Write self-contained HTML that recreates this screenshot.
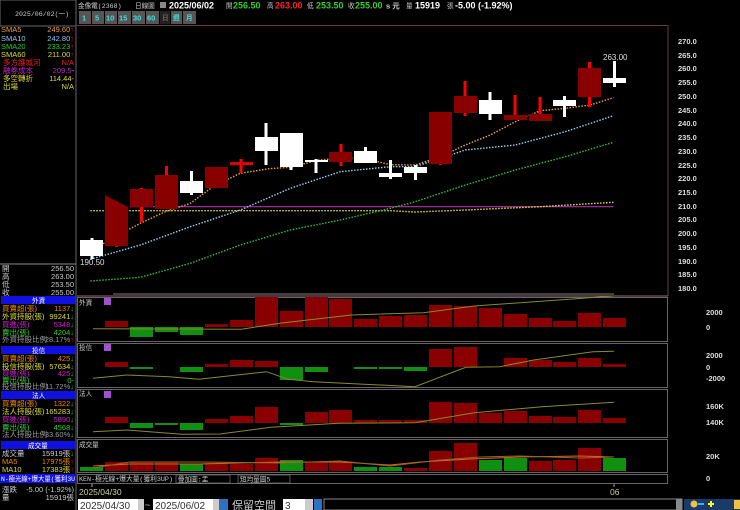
<!DOCTYPE html>
<html><head><meta charset="utf-8"><style>
html,body{margin:0;padding:0;background:#000;width:740px;height:510px;overflow:hidden}
svg{display:block}
text{font-family:"Liberation Sans","Noto Sans CJK TC",sans-serif;font-size:7.5px}
.m{font-family:"Liberation Mono","Noto Sans CJK TC",monospace;font-size:6.6px}
.ax{font-family:"Liberation Sans",sans-serif;font-size:8.5px;font-weight:bold;fill:#ddd}
</style></head><body>
<svg width="740" height="510" viewBox="0 0 740 510" xmlns="http://www.w3.org/2000/svg">
<rect width="740" height="510" fill="#000"/>
<!-- left panel -->
<rect x="0" y="0" width="76" height="26" fill="#000" stroke="#666" stroke-width="1"/>
<text x="15" y="16" fill="#ccc" class="m">2025/06/02(一)</text>
<line x1="76" y1="0" x2="76" y2="510" stroke="#666"/>
<g class="m">
<text x="1" y="32" fill="#e8a040">SMA5</text><text x="74" y="32" fill="#e8a040" text-anchor="end">249.60<tspan fill="#f00">↑</tspan></text>
<text x="1" y="41" fill="#8cc8f0">SMA10</text><text x="74" y="41" fill="#8cc8f0" text-anchor="end">242.80<tspan fill="#f00">↑</tspan></text>
<text x="1" y="49" fill="#2c2">SMA20</text><text x="74" y="49" fill="#2c2" text-anchor="end">233.23<tspan fill="#f00">↑</tspan></text>
<text x="1" y="57" fill="#dd3">SMA60</text><text x="74" y="57" fill="#dd3" text-anchor="end">211.00<tspan fill="#f00">↑</tspan></text>
<text x="3" y="65" fill="#e22">多方護城河</text><text x="74" y="65" fill="#e22" text-anchor="end">N/A</text>
<text x="3" y="73" fill="#c2c">融券成本</text><text x="74" y="73" fill="#c2c" text-anchor="end">209.5<tspan fill="#ccc">-</tspan></text>
<text x="3" y="81" fill="#dd3">多空轉折</text><text x="74" y="81" fill="#dd3" text-anchor="end">114.44<tspan fill="#ccc">-</tspan></text>
<text x="3" y="89" fill="#dd3">出場</text><text x="74" y="89" fill="#dd3" text-anchor="end">N/A</text>
</g>
<line x1="0" y1="264" x2="76" y2="264" stroke="#888"/>
<g class="m" fill="#ccc">
<text x="2" y="271">開</text><text x="74" y="271" text-anchor="end">256.50</text>
<text x="2" y="279">高</text><text x="74" y="279" text-anchor="end">263.00</text>
<text x="2" y="287">低</text><text x="74" y="287" text-anchor="end">253.50</text>
<text x="2" y="295">收</text><text x="74" y="295" text-anchor="end">255.00</text>
</g>
<!-- 外資 -->
<rect x="1" y="296" width="74" height="8" fill="#1010e0"/><text x="32" y="303" fill="#fff" class="m">外資</text>
<g class="m">
<text x="2" y="311" fill="#e80">買賣超(張)</text><text x="74" y="311" fill="#e80" text-anchor="end">1137<tspan fill="#3c3">↓</tspan></text>
<text x="2" y="319" fill="#dd3">外資持股(張)</text><text x="74" y="319" fill="#dd3" text-anchor="end">99241<tspan fill="#3c3">↓</tspan></text>
<text x="2" y="327" fill="#c2c">買進(張)</text><text x="74" y="327" fill="#c2c" text-anchor="end">5348<tspan fill="#3c3">↓</tspan></text>
<text x="2" y="335" fill="#3c3">賣出(張)</text><text x="74" y="335" fill="#3c3" text-anchor="end">4204<tspan fill="#3c3">↓</tspan></text>
<text x="2" y="342" fill="#999">外資持股比例</text><text x="74" y="342" fill="#999" text-anchor="end">28.17%<tspan fill="#f00">↑</tspan></text>
</g>
<rect x="1" y="346" width="74" height="8" fill="#1010e0"/><text x="32" y="353" fill="#fff" class="m">投信</text>
<g class="m">
<text x="2" y="361" fill="#e80">買賣超(張)</text><text x="74" y="361" fill="#e80" text-anchor="end">425<tspan fill="#3c3">↓</tspan></text>
<text x="2" y="369" fill="#dd3">投信持股(張)</text><text x="74" y="369" fill="#dd3" text-anchor="end">57634<tspan fill="#3c3">↓</tspan></text>
<text x="2" y="376" fill="#c2c">買進(張)</text><text x="74" y="376" fill="#c2c" text-anchor="end">425<tspan fill="#3c3">↓</tspan></text>
<text x="2" y="383" fill="#3c3">賣出(張)</text><text x="74" y="383" fill="#3c3" text-anchor="end">0-</text>
<text x="2" y="389" fill="#999">投信持股比例</text><text x="74" y="389" fill="#999" text-anchor="end">11.72%<tspan fill="#3c3">↓</tspan></text>
</g>
<rect x="1" y="391" width="74" height="8" fill="#1010e0"/><text x="32" y="398" fill="#fff" class="m">法人</text>
<g class="m">
<text x="2" y="406" fill="#e80">買賣超(張)</text><text x="74" y="406" fill="#e80" text-anchor="end">1322<tspan fill="#3c3">↓</tspan></text>
<text x="2" y="414" fill="#dd3">法人持股(張)</text><text x="74" y="414" fill="#dd3" text-anchor="end">165283<tspan fill="#3c3">↓</tspan></text>
<text x="2" y="422" fill="#c2c">買進(張)</text><text x="74" y="422" fill="#c2c" text-anchor="end">5890<tspan fill="#3c3">↓</tspan></text>
<text x="2" y="430" fill="#3c3">賣出(張)</text><text x="74" y="430" fill="#3c3" text-anchor="end">4568<tspan fill="#3c3">↓</tspan></text>
<text x="2" y="437" fill="#999">法人持股比例</text><text x="74" y="437" fill="#999" text-anchor="end">33.60%<tspan fill="#3c3">↓</tspan></text>
</g>
<rect x="1" y="441" width="74" height="8" fill="#1010e0"/><text x="28" y="448" fill="#fff" class="m">成交量</text>
<g class="m">
<text x="2" y="456" fill="#ccc">成交量</text><text x="74" y="456" fill="#ccc" text-anchor="end">15919張<tspan fill="#3c3">↓</tspan></text>
<text x="2" y="464" fill="#e80">MA5</text><text x="74" y="464" fill="#e80" text-anchor="end">17975張<tspan fill="#f00">↑</tspan></text>
<text x="2" y="472" fill="#dd3">MA10</text><text x="74" y="472" fill="#dd3" text-anchor="end">17383張<tspan fill="#f00">↑</tspan></text>
</g>
<rect x="0" y="474" width="76" height="9" fill="#1010e0"/><text x="1" y="481" fill="#fff" class="m" textLength="74" lengthAdjust="spacingAndGlyphs">N-極光線+爆大量(獲利3U</text>
<g class="m" fill="#ccc">
<text x="2" y="492">漲跌</text><text x="74" y="492" text-anchor="end">-5.00 (-1.92%)</text>
<text x="2" y="500">量</text><text x="74" y="500" text-anchor="end">15919張</text>
</g>

<!-- header -->
<text x="78" y="8" fill="#ccc" class="m">金像電(2368)</text>
<text x="135" y="8" fill="#ccc" class="m">日線圖</text>
<rect x="160" y="2" width="6" height="6" fill="#888"/>
<text x="169" y="8.5" fill="#fff" style="font-size:9px;font-weight:bold">2025/06/02</text>
<text x="226" y="8" fill="#ccc" class="m">開</text><text x="233" y="8.5" fill="#3c3" style="font-size:9px;font-weight:bold">256.50</text>
<text x="267" y="8" fill="#ccc" class="m">高</text><text x="275" y="8.5" fill="#f22" style="font-size:9px;font-weight:bold">263.00</text>
<text x="307" y="8" fill="#ccc" class="m">低</text><text x="316" y="8.5" fill="#3c3" style="font-size:9px;font-weight:bold">253.50</text>
<text x="348" y="8" fill="#ccc" class="m">收</text><text x="355" y="8.5" fill="#3c3" style="font-size:9px;font-weight:bold">255.00</text>
<text x="386" y="8.5" fill="#ccc" style="font-size:7.5px;font-weight:bold">s 元</text>
<text x="406" y="8" fill="#ccc" class="m">量</text><text x="415" y="8.5" fill="#fff" style="font-size:9px;font-weight:bold">15919</text>
<text x="447" y="8" fill="#ccc" class="m">張</text><text x="455" y="8.5" fill="#fff" style="font-size:9px;font-weight:bold">-5.00 (-1.92%)</text>
<g style="font-size:8.5px;font-weight:bold">
<rect x="79" y="11" width="12" height="13" fill="#555"/><text x="82" y="20.5" fill="#4dd">1</text>
<rect x="92" y="11" width="12" height="13" fill="#555"/><text x="95" y="20.5" fill="#4dd">5</text>
<rect x="105" y="11" width="12" height="13" fill="#555"/><text x="106" y="20.5" fill="#4dd">10</text>
<rect x="118" y="11" width="13" height="13" fill="#555"/><text x="119" y="20.5" fill="#4dd">15</text>
<rect x="132" y="11" width="13" height="13" fill="#555"/><text x="133" y="20.5" fill="#4dd">30</text>
<rect x="146" y="11" width="13" height="13" fill="#555"/><text x="147" y="20.5" fill="#4dd">60</text>
<rect x="160" y="11" width="10" height="13" fill="#222"/><text x="162" y="20" fill="#666" class="m">日</text>
<rect x="171" y="11" width="11" height="13" fill="#555"/><text x="173" y="20" fill="#4dd" class="m">週</text>
<rect x="183" y="11" width="13" height="13" fill="#555"/><text x="186" y="20" fill="#4dd" class="m">月</text>
</g>

<!-- main chart frame -->
<line x1="77" y1="25.5" x2="668" y2="25.5" stroke="#6a3a48"/>
<line x1="668" y1="25" x2="668" y2="296" stroke="#6a3a48"/>
<line x1="113" y1="294" x2="614" y2="294" stroke="#555" stroke-width="1.5"/>
<line x1="77" y1="296" x2="668" y2="296" stroke="#9a6a78"/>
<!-- price axis -->
<g class="ax">
<text x="678" y="44">270.0</text><text x="678" y="58">265.0</text><text x="678" y="71">260.0</text><text x="678" y="85">255.0</text>
<text x="678" y="99">250.0</text><text x="678" y="113">245.0</text><text x="678" y="126">240.0</text><text x="678" y="140">235.0</text>
<text x="678" y="154">230.0</text><text x="678" y="168">225.0</text><text x="678" y="181">220.0</text><text x="678" y="195">215.0</text>
<text x="678" y="209">210.0</text><text x="678" y="222">205.0</text><text x="678" y="236">200.0</text><text x="678" y="250">195.0</text>
<text x="678" y="264">190.0</text><text x="678" y="277">185.0</text><text x="678" y="291">180.0</text>
</g>
<!-- MA lines -->
<g fill="none" stroke-width="1.4" stroke-dasharray="1.5,1.5">
<polyline stroke="#b030b0" stroke-dasharray="none" stroke-width="1.2" points="129.6,206.7 613.5,206.7"/>
<polyline stroke="#e8e030" points="90.3,210.7 390.3,210.7 415.3,212 465.3,210 540.3,206.7 613.5,202.3"/>
<polyline stroke="#30c030" points="90.3,281 140.3,277.3 190.3,263.3 240.3,245 290.3,230 340.3,220 390.3,208.3 415.3,201.7 465.3,185 515.3,170 565.3,156.7 613.5,142.3"/>
<polyline stroke="#90d0f0" points="90.3,259.3 140.3,245 190.3,226.7 240.3,210 290.3,188.3 340.3,171.7 390.3,166.7 415.3,166.7 440.3,158.3 465.3,150 515.3,145 565.3,131.7 613.5,115.7"/>
<polyline stroke="#f0a040" points="90.3,251.7 108.1,240.7 140.3,223.3 165.3,211.7 190.3,203.3 215.3,185 240.3,173.3 268.9,168.7 290.3,167.3 318.9,160 340.3,158.3 365.3,158.7 390.3,164.7 415.3,165 440.3,156.7 465.3,145 490.3,135 515.3,121.7 540.3,110.7 565.3,108.3 590.3,105 613.5,97.7"/>
</g>
<!-- candles -->
<g>
<rect x="90.5" y="238" width="3" height="21" fill="#fff"/><rect x="80" y="240" width="23" height="16" fill="#fff"/>
<rect x="115" y="240" width="3" height="7" fill="#f00"/><polygon points="105,195 128,207 128,246 105,246" fill="#800"/>
<rect x="140" y="188" width="3" height="34" fill="#f00"/><rect x="130" y="189" width="23" height="18" fill="#800"/>
<rect x="165" y="166" width="3" height="43" fill="#f00"/><rect x="155" y="175" width="23" height="34" fill="#800"/>
<rect x="190" y="171" width="3" height="24" fill="#fff"/><rect x="180" y="181" width="23" height="12" fill="#fff"/>
<rect x="205" y="167" width="23" height="21" fill="#800"/>
<rect x="239.5" y="159" width="3" height="14" fill="#f00"/><rect x="230" y="162" width="23" height="3" fill="#d00"/>
<rect x="264.5" y="123" width="3" height="42" fill="#fff"/><rect x="255" y="137" width="23" height="14" fill="#fff"/>
<rect x="289.5" y="133" width="3" height="37" fill="#fff"/><rect x="280" y="133" width="23" height="34" fill="#fff"/>
<rect x="314.5" y="159" width="3" height="14" fill="#fff"/><rect x="305" y="160" width="23" height="2" fill="#fff"/>
<rect x="339.5" y="144" width="3" height="22" fill="#f00"/><rect x="329" y="152" width="23" height="10" fill="#800"/>
<rect x="364" y="147" width="3" height="16" fill="#fff"/><rect x="354" y="151" width="23" height="12" fill="#fff"/>
<rect x="389" y="160" width="3" height="19" fill="#fff"/><rect x="379" y="173" width="23" height="4" fill="#fff"/>
<rect x="414" y="165" width="3" height="15" fill="#fff"/><rect x="404" y="167" width="23" height="6" fill="#fff"/>
<rect x="439" y="112" width="3" height="53" fill="#f00"/><rect x="429" y="112" width="23" height="52" fill="#800"/>
<rect x="463.5" y="81" width="3" height="35" fill="#f00"/><rect x="454" y="96" width="23" height="17" fill="#800"/>
<rect x="488.5" y="92" width="3" height="28" fill="#fff"/><rect x="479" y="100" width="23" height="14" fill="#fff"/>
<rect x="513.5" y="95" width="3" height="25" fill="#f00"/><rect x="504" y="115" width="23" height="5" fill="#800"/>
<rect x="538.5" y="97" width="3" height="24" fill="#f00"/><rect x="529" y="114" width="23" height="7" fill="#800"/>
<rect x="563" y="96" width="3" height="21" fill="#fff"/><rect x="553" y="100" width="23" height="6" fill="#fff"/>
<rect x="588" y="62" width="3" height="45" fill="#f00"/><rect x="578" y="68" width="23" height="29" fill="#800"/>
<rect x="613" y="61" width="3" height="26" fill="#fff"/><rect x="603" y="78" width="23" height="5" fill="#fff"/>
</g>
<text x="80" y="265" fill="#ddd" style="font-size:8px">190.50</text>
<text x="603" y="60" fill="#ddd" style="font-size:8px">263.00</text>

<!-- indicator panels -->
<g fill="none" stroke="#666">
<rect x="77.5" y="297.5" width="590" height="44"/>
<rect x="77.5" y="343.5" width="590" height="44"/>
<rect x="77.5" y="389.5" width="590" height="48"/>
<rect x="77.5" y="439.5" width="590" height="33"/>
<rect x="77.5" y="474.5" width="590" height="9"/>
</g>
<text x="79" y="305" fill="#ccc" class="m">外資</text><rect x="104" y="298" width="7" height="7" fill="#a050d0"/>
<text x="79" y="350" fill="#ccc" class="m">投信</text><rect x="104" y="344" width="7" height="7" fill="#a050d0"/>
<text x="79" y="396" fill="#ccc" class="m">法人</text><rect x="104" y="391" width="7" height="7" fill="#a050d0"/>
<text x="79" y="447" fill="#ccc" class="m">成交量</text>
<g class="ax" style="font-size:8px">
<text x="706" y="315">2000</text><text x="706" y="330">0</text>
<text x="706" y="358">2000</text><text x="706" y="370">0</text><text x="706" y="381">-2000</text>
<text x="706" y="409">160K</text><text x="706" y="425">140K</text>
<text x="706" y="459">20K</text><text x="706" y="481">0</text>
</g>
<!-- 外資 bars zero 327 -->
<g fill="#8a0000">
<rect x="105" y="321" width="23" height="6"/><rect x="205" y="324" width="23" height="3"/><rect x="230" y="320" width="23" height="7"/>
<rect x="255" y="297" width="23" height="30"/><rect x="280" y="311" width="23" height="16"/><rect x="305" y="297" width="23" height="30"/>
<rect x="329" y="299" width="23" height="28"/><rect x="354" y="319" width="23" height="8"/><rect x="379" y="316" width="23" height="11"/>
<rect x="404" y="315" width="23" height="12"/><rect x="429" y="305" width="23" height="22"/><rect x="454" y="306" width="23" height="21"/>
<rect x="479" y="308" width="23" height="19"/><rect x="504" y="314" width="23" height="13"/><rect x="529" y="318" width="23" height="9"/>
<rect x="553" y="321" width="23" height="6"/><rect x="578" y="313" width="23" height="14"/><rect x="603" y="318" width="23" height="9"/>
</g>
<g fill="#109010"><rect x="130" y="327" width="23" height="10"/><rect x="155" y="327" width="23" height="5"/><rect x="180" y="327" width="23" height="8"/></g>
<polyline fill="none" stroke="#8a8a2a" stroke-width="1" points="93,328.7 241.3,329.3 279.4,323.3 351.4,315 423.5,312.7 474.3,306 614.1,296"/>
<!-- 投信 zero 367 -->
<g fill="#8a0000">
<rect x="105" y="362" width="23" height="5"/><rect x="205" y="364" width="23" height="3"/><rect x="230" y="360" width="23" height="7"/>
<rect x="255" y="361" width="23" height="6"/><rect x="429" y="349" width="23" height="18"/><rect x="454" y="347" width="23" height="20"/>
<rect x="504" y="358" width="23" height="9"/><rect x="529" y="360" width="23" height="7"/><rect x="553" y="362" width="23" height="5"/>
<rect x="578" y="358" width="23" height="9"/><rect x="603" y="364" width="23" height="3"/>
</g>
<g fill="#109010">
<rect x="130" y="367" width="23" height="2"/><rect x="180" y="367" width="23" height="5"/><rect x="280" y="367" width="23" height="13"/>
<rect x="305" y="367" width="23" height="5"/><rect x="354" y="367" width="23" height="2"/><rect x="379" y="367" width="23" height="2"/><rect x="404" y="367" width="23" height="4"/>
</g>
<polyline fill="none" stroke="#8a8a2a" stroke-width="1" points="93,378.3 126.8,375 169.2,376.7 198.9,379.3 266.7,371.7 287.9,379.3 313.3,381.7 415,386.7 465.8,367.3 499.7,366.7 533.6,360 593,351.7 614.1,351.3"/>
<!-- 法人 zero 423 -->
<g fill="#8a0000">
<rect x="105" y="417" width="23" height="6"/><rect x="205" y="419" width="23" height="4"/><rect x="230" y="416" width="23" height="7"/>
<rect x="255" y="407" width="23" height="16"/><rect x="305" y="412" width="23" height="11"/><rect x="329" y="410" width="23" height="13"/>
<rect x="354" y="420" width="23" height="3"/><rect x="379" y="420" width="23" height="3"/><rect x="404" y="420" width="23" height="3"/>
<rect x="429" y="402" width="23" height="21"/><rect x="454" y="403" width="23" height="20"/><rect x="479" y="413" width="23" height="10"/>
<rect x="504" y="411" width="23" height="12"/><rect x="529" y="416" width="23" height="7"/><rect x="553" y="417" width="23" height="6"/>
<rect x="578" y="410" width="23" height="13"/><rect x="603" y="418" width="23" height="5"/>
</g>
<g fill="#109010"><rect x="130" y="423" width="23" height="5"/><rect x="155" y="423" width="23" height="2"/><rect x="180" y="423" width="23" height="7"/><rect x="280" y="423" width="23" height="2"/></g>
<polyline fill="none" stroke="#8a8a2a" stroke-width="1" points="93,431.7 126.8,430 181.9,434.3 220.1,434 270.9,427.3 338.7,423.3 415,422.7 474.3,412.7 542.1,406.7 614.1,402.3"/>
<!-- volume base 471 -->
<g fill="#8a0000">
<rect x="105" y="462" width="23" height="9"/><rect x="130" y="462" width="23" height="9"/><rect x="155" y="462" width="23" height="9"/>
<rect x="205" y="463" width="23" height="8"/><rect x="230" y="464" width="23" height="7"/><rect x="255" y="458" width="23" height="13"/>
<rect x="305" y="462" width="23" height="9"/><rect x="329" y="462" width="23" height="9"/><rect x="404" y="468" width="23" height="3"/>
<rect x="429" y="451" width="23" height="20"/><rect x="454" y="443" width="23" height="28"/><rect x="529" y="461" width="23" height="10"/>
<rect x="553" y="460" width="23" height="11"/><rect x="578" y="448" width="23" height="23"/>
</g>
<g fill="#109010">
<rect x="80" y="467" width="23" height="4"/><rect x="180" y="464" width="23" height="7"/><rect x="280" y="460" width="23" height="11"/>
<rect x="354" y="467" width="23" height="4"/><rect x="379" y="467" width="23" height="4"/><rect x="479" y="460" width="23" height="11"/>
<rect x="504" y="458" width="23" height="13"/><rect x="603" y="458" width="23" height="13"/>
</g>
<polyline fill="none" stroke="#e06020" stroke-width="1" points="93,466 130,464 200,464 280,462 340,462 390,465 420,462 470,459 520,457 580,456 614,457"/>
<polyline fill="none" stroke="#8a6a2a" stroke-width="1" points="93,468 130,462 200,462 280,463 340,461 390,466 440,460 480,457 520,456 580,458 614,457"/>
<!-- indicator row -->
<text x="79" y="481" fill="#ccc" class="m" textLength="94" lengthAdjust="spacingAndGlyphs">KEN-極光線+爆大量(獲利3UP)</text>
<rect x="176" y="475" width="54" height="8" fill="#000" stroke="#888" stroke-width="0.6"/><text x="178" y="481.5" fill="#ccc" class="m">疊加圖:盂</text>
<rect x="238" y="475" width="52" height="8" fill="#000" stroke="#888" stroke-width="0.6"/><text x="240" y="481.5" fill="#ccc" class="m">短均量圖5</text>
<!-- date row -->
<line x1="92" y1="484" x2="92" y2="487" stroke="#aa8"/><line x1="614" y1="484" x2="614" y2="487" stroke="#aa8"/>
<text x="79" y="495" fill="#cc9" style="font-size:8.5px">2025/04/30</text>
<text x="610" y="495" fill="#cc9" style="font-size:8.5px">06</text>
<!-- controls -->
<rect x="78" y="499" width="60" height="11" fill="#fff"/><text x="80" y="509" fill="#333" style="font-size:10px">2025/04/30</text>
<rect x="138" y="499" width="6" height="11" fill="#ccc"/>
<text x="145" y="508" fill="#ccc" style="font-size:9px">~</text>
<rect x="153" y="499" width="60" height="11" fill="#fff"/><text x="155" y="509" fill="#333" style="font-size:10px">2025/06/02</text>
<rect x="213" y="499" width="6" height="11" fill="#ccc"/>
<rect x="219" y="499" width="9" height="11" fill="#3070c0"/>
<text x="232" y="509" fill="#ccc" style="font-size:11px">保留空間</text>
<rect x="283" y="499" width="22" height="11" fill="#fff"/><text x="285" y="509" fill="#333" style="font-size:10px">3</text>
<rect x="305" y="499" width="8" height="11" fill="#ccc"/>
<rect x="314" y="499" width="8" height="11" fill="#3070c0"/>
<rect x="324" y="499" width="358" height="11" fill="#000" stroke="#888"/>
<rect x="676" y="499" width="6" height="11" fill="#888"/>
<rect x="684" y="499" width="56" height="11" fill="#1a3a6a"/>
<circle cx="694" cy="504" r="3.5" fill="#f0c040"/>
<rect x="698" y="503" width="6" height="2" fill="#4af"/>
<rect x="708" y="503" width="6" height="2" fill="#ff0"/><rect x="710" y="501" width="2" height="6" fill="#ff0"/>
<rect x="734" y="500" width="6" height="9" fill="#f0c040"/>
</svg>
</body></html>
